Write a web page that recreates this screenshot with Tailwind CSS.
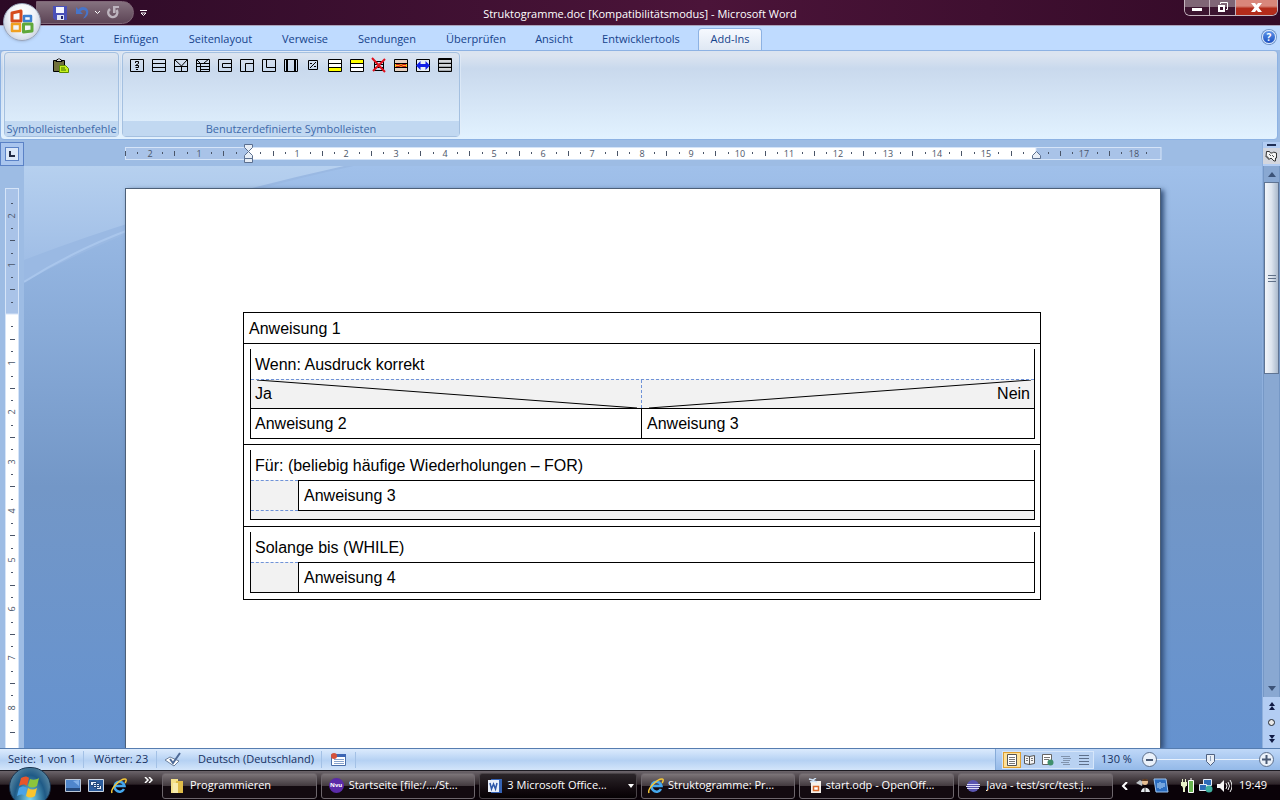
<!DOCTYPE html>
<html lang="de">
<head>
<meta charset="utf-8">
<title>Struktogramme.doc - Microsoft Word</title>
<script src="https://cdn.jsdelivr.net/npm/@tailwindcss/browser@4"></script>
</head>
<body class="flex h-screen flex-col overflow-hidden bg-[#9dbce4] font-['Open_Sans','Noto_Sans',sans-serif] text-[11px] text-[#15428b]">

<!-- Title bar -->
<header class="relative flex h-[26px] shrink-0 items-start justify-between border-b border-[#a9a3ba] bg-linear-to-r from-[#2c0a26] via-[#4b1439] via-55% to-[#330a27] text-white">
  <div class="flex h-[25px] w-[320px] items-center pl-9">
    <div class="flex h-[23px] w-[98px] items-center gap-[6px] rounded-r-full border border-[#806878] bg-linear-to-b from-[#85727f] to-[#5d4556] pl-[16px]">
      <button aria-label="Speichern"><svg class="block" width="14" height="14" viewBox="0 0 14 14"><path d="M0 0h14v14H2L0 12z" fill="#4a50b8"/><path d="M3 1h8v6H3z" fill="#f4f6ff"/><path d="M4 9h7v5H4z" fill="#dfe4f5"/><path d="M8 10h2v3H8z" fill="#23276e"/></svg></button>
      <button aria-label="Rückgängig" class="ml-[2px]"><svg class="block" width="15" height="14" viewBox="0 0 15 14"><path d="M1 1v7h7L5.500 5.500c3-3 6.500-1 5.500 2-.5 2-1.500 3-3 5 6-1 8-11 0-11.500C6 1 4.500 2 3.500 3.500z" fill="#4774c8"/></svg></button>
      <button aria-label="Rückgängig-Liste" class="-ml-[2px]"><svg class="block" width="7" height="5" viewBox="0 0 7 5"><path d="M1 1l2.500 2.500L6 1" fill="none" stroke="#fff"/></svg></button>
      <button aria-label="Wiederholen"><svg class="block" width="13" height="14" viewBox="0 0 13 14"><path d="M3 3A4.500 4.500 0 1 0 9.500 4" fill="none" stroke="#bdb4be" stroke-width="2.500"/><path d="M6 0h6v2H8.500v5H6z" fill="#bdb4be"/></svg></button>
    </div>
    <button class="ml-[6px]" aria-label="Symbolleiste anpassen"><svg class="block" width="7" height="8" viewBox="0 0 7 8"><path d="M0 1.500h7M1 4h5L3.500 6.500z" fill="none" stroke="#fff"/></svg></button>
  </div>
  <h1 class="pt-[5px] text-[11px] leading-[18px]">Struktogramme.doc [Kompatibilitätsmodus] - Microsoft Word</h1>
  <div class="flex w-[320px] justify-end pr-[2px]">
    <div class="flex h-[16px] w-[94px] overflow-hidden rounded-b-md border border-t-0 border-[#c4b4be]">
      <button aria-label="Minimieren" class="flex w-[25px] items-end justify-center border-r border-[#c4b4be] bg-linear-to-b from-[#7f6676] from-45% to-[#3c1530] to-50% pb-1"><span class="h-[3px] w-[10px] bg-white"></span></button>
      <button aria-label="Verkleinern" class="flex w-[26px] items-center justify-center border-r border-[#c4b4be] bg-linear-to-b from-[#7f6676] from-45% to-[#3c1530] to-50%"><svg width="11" height="11" viewBox="0 0 11 11"><path d="M3.500 2V.5h7v7H9" fill="none" stroke="#fff"/><path d="M2 4h5v5H2z" fill="none" stroke="#fff" stroke-width="2"/></svg></button>
      <button aria-label="Schließen" class="flex flex-1 items-center justify-center bg-linear-to-b from-[#d9877b] from-40% to-[#b32c1b] to-55%"><svg width="11" height="9" viewBox="0 0 11 9"><path d="M0 0h4l1.500 2L7 0h4L7.500 4.500 11 9H7L5.500 7 4 9H0l3.500-4.500z" fill="#fff"/></svg></button>
    </div>
  </div>
  <button aria-label="Office-Schaltfläche" class="absolute left-[3px] top-[3px] z-10 flex h-[38px] w-[38px] items-center justify-center rounded-full border border-[#9aa5ba] bg-radial-[at_50%_30%] from-white via-[#eef2f8] to-[#b3bdd0] shadow">
    <svg width="26" height="26" viewBox="0 0 26 26" fill="none" stroke-linejoin="round">
      <path d="M3 4l9-2v10H3z" stroke="#d64a1c" stroke-width="3"/>
      <path d="M15 7h7v5h-7z" stroke="#3c7fd0" stroke-width="2.500"/>
      <path d="M3 15h8v7H3z" stroke="#f0a020" stroke-width="2.500"/>
      <path d="M14.500 15H23v7l-8.500 1z" stroke="#5fa83a" stroke-width="3"/>
    </svg>
  </button>
</header>

<!-- Ribbon tabs -->
<nav class="flex h-[24px] shrink-0 items-end justify-between bg-[#bfdbff] pl-[45px] pr-[4px]">
  <div class="flex h-[22px]" role="tablist">
    <button role="tab" class="w-[54px]">Start</button>
    <button role="tab" class="w-[74px]">Einfügen</button>
    <button role="tab" class="w-[95px]">Seitenlayout</button>
    <button role="tab" class="w-[74px]">Verweise</button>
    <button role="tab" class="w-[90px]">Sendungen</button>
    <button role="tab" class="w-[88px]">Überprüfen</button>
    <button role="tab" class="w-[68px]">Ansicht</button>
    <button role="tab" class="w-[106px]">Entwicklertools</button>
    <button role="tab" aria-selected="true" class="ml-[4px] w-[64px] rounded-t border border-b-0 border-[#8db2e3] bg-linear-to-b from-[#f6f9fe] to-[#dfe8f4]">Add-Ins</button>
  </div>
  <button aria-label="Hilfe" class="mb-[6px] flex h-[14px] w-[14px] items-center justify-center rounded-full border border-[#dce8fa] bg-linear-to-b from-[#5f95ea] to-[#1c4fc0] text-[10px] font-bold leading-none text-white ring-1 ring-[#7295c8]">?</button>
</nav>

<!-- Ribbon -->
<section class="h-[92px] shrink-0 pb-[2px] pr-[2px]">
  <div class="flex h-full gap-[3px] rounded border border-[#8db2e3] bg-linear-to-b from-[#dbe4f0] from-5% via-[#c9d9ed] via-20% to-[#e2f2ff] pl-[3px] pt-px">
    <div class="flex h-[85px] w-[115px] flex-col justify-between rounded-sm border border-[#a4c0e0] ring-1 ring-[#e4eefa]/60">
      <div class="flex justify-center pr-[2px] pt-[5px]">
        <button aria-label="Einfügen"><svg class="block" width="17" height="16" viewBox="0 0 17 16"><path d="M1.500 2.500h11v11h-11z" fill="#71713c" stroke="#000"/><path d="M4 3.500l1-2h1l1-1 1 1h1l1 2z" fill="#ddd" stroke="#000"/><path d="M7.500 7.500h6l3 3v4h-9z" fill="#c6f21a" stroke="#5a8a00"/><path d="M9 10h4M9 12h5" stroke="#3a6a00"/></svg></button>
      </div>
      <h2 class="h-[15px] bg-[#c1d8f1] text-center text-[11px] leading-[15px] text-[#3e6aaa]">Symbolleistenbefehle</h2>
    </div>
    <div class="flex h-[85px] w-[338px] flex-col justify-between rounded-sm border border-[#a4c0e0] ring-1 ring-[#e4eefa]/60">
      <div class="flex pl-[3px] pt-[4px]">
        <button class="flex w-[22px] justify-center" aria-label="Eigenschaften"><svg width="16" height="16" viewBox="0 0 16 16" fill="none" stroke="#000"><path d="M1.500 2.500h13v12h-13z"/><path d="M6.500 6V4.500h3v2l-3 2h3v2h-3M7 12.500h2"/></svg></button>
        <button class="flex w-[22px] justify-center" aria-label="Anweisung"><svg width="16" height="16" viewBox="0 0 16 16" fill="none" stroke="#000"><path d="M1.500 2.500h13v12h-13zM1 6.500h14M1 10.500h14"/></svg></button>
        <button class="flex w-[22px] justify-center" aria-label="Verzweigung"><svg width="16" height="16" viewBox="0 0 16 16" fill="none" stroke="#000"><path d="M1.500 2.500h13v12h-13zM1 9.500h14M8.500 9v6M2 3l6.500 6L14 3"/></svg></button>
        <button class="flex w-[22px] justify-center" aria-label="Fallauswahl"><svg width="16" height="16" viewBox="0 0 16 16" fill="none" stroke="#000"><path d="M1.500 2.500h13v12h-13zM1 6.500h14M1 9.500h14M5 12.500h10M5.500 6v9M9 6l5-4M2 3l3.500 3.500"/></svg></button>
        <button class="flex w-[22px] justify-center" aria-label="Zählschleife"><svg width="16" height="16" viewBox="0 0 16 16" fill="none" stroke="#000"><path d="M1.500 2.500h13v12h-13zM15 6.500H5.500v4H15"/></svg></button>
        <button class="flex w-[22px] justify-center" aria-label="Kopfgesteuerte Schleife"><svg width="16" height="16" viewBox="0 0 16 16" fill="none" stroke="#000"><path d="M1.500 2.500h13v12h-13zM15 6.500H6.500V15"/></svg></button>
        <button class="flex w-[22px] justify-center" aria-label="Fußgesteuerte Schleife"><svg width="16" height="16" viewBox="0 0 16 16" fill="none" stroke="#000"><path d="M1.500 2.500h13v12h-13zM5.500 2v8.500H15"/></svg></button>
        <button class="flex w-[22px] justify-center" aria-label="Unterprogramm"><svg width="16" height="16" viewBox="0 0 16 16" fill="none" stroke="#000"><path d="M1.500 2.500h13v12h-13z"/><path d="M4 2v13M12 2v13" stroke-width="2"/></svg></button>
        <button class="flex w-[22px] justify-center" aria-label="Skalieren"><svg width="16" height="16" viewBox="0 0 16 16" fill="none" stroke="#000"><path d="M3.500 3.500h9v9h-9zM5 11l6-6M5 6.500h2M9 9.500h2"/></svg></button>
        <button class="flex w-[22px] justify-center" aria-label="Zeile unten einfügen"><svg width="16" height="16" viewBox="0 0 16 16" fill="none" stroke="#000"><path d="M2 3h12v8H2z" fill="#fff" stroke="none"/><path d="M2 11h12v3H2z" fill="#ff0" stroke="none"/><path d="M1.500 2.500h13v12h-13zM1 6.500h14M1 10.500h14"/></svg></button>
        <button class="flex w-[22px] justify-center" aria-label="Zeile oben einfügen"><svg width="16" height="16" viewBox="0 0 16 16" fill="none" stroke="#000"><path d="M2 7h12v7H2z" fill="#fff" stroke="none"/><path d="M2 3h12v3H2z" fill="#ff0" stroke="none"/><path d="M1.500 2.500h13v12h-13zM1 6.500h14M1 10.500h14"/></svg></button>
        <button class="flex w-[22px] justify-center" aria-label="Löschen"><svg width="16" height="16" viewBox="0 0 16 16" fill="none" stroke="#000"><path d="M3.500 4.500h9v9h-9zM3 7.500h10M3 10.500h10"/><path d="M1 1l13 14M14 2L2 14" stroke="#e0101c" stroke-width="2"/></svg></button>
        <button class="flex w-[22px] justify-center" aria-label="Verbinden"><svg width="16" height="16" viewBox="0 0 16 16" fill="none" stroke="#000"><path d="M2 3h12v11H2z" fill="#e4d0c0" stroke="none"/><path d="M2 6h12v5H2z" fill="#f8c020" stroke="none"/><path d="M1.500 2.500h13v12h-13zM1 6.500h14M1 10.500h14"/><path d="M3 7.500h3l4 2h3M3 9.500h3l4-2h3" stroke="#d01818"/></svg></button>
        <button class="flex w-[22px] justify-center" aria-label="Breite anpassen"><svg width="16" height="16" viewBox="0 0 16 16" fill="none" stroke="#000"><path d="M1.500 2.500h13v12h-13z" fill="#e8eef6"/><path d="M1 8.500L5.500 4v3h5V4L15 8.500 10.500 13v-3h-5v3z" fill="#1020e8" stroke="none"/></svg></button>
        <button class="flex w-[22px] justify-center" aria-label="Rahmen"><svg width="16" height="16" viewBox="0 0 16 16" fill="none" stroke="#000"><path d="M1.500 1.500h13v13h-13z" fill="#d4d6da"/><path d="M1 2.500h14M1 6.500h14M1 10.500h14"/><path d="M2 5.500h12M2 9.500h12M2 13.500h12" stroke="#a4a8ae"/></svg></button>
      </div>
      <h2 class="h-[15px] bg-[#c1d8f1] text-center text-[11px] leading-[15px] text-[#3e6aaa]">Benutzerdefinierte Symbolleisten</h2>
    </div>
  </div>
</section>

<!-- Editing area -->
<main class="flex min-h-0 flex-1">
  <div class="flex w-6 shrink-0 flex-col items-center">
    <button aria-label="Tabstopp" class="flex h-[24px] w-6 shrink-0 items-center justify-center border border-[#5b82c6] bg-[#a9c5ee]"><span class="flex h-[14px] w-[14px] items-center justify-center border border-[#5b82c6] bg-[#dce8f8]"><span class="h-[6px] w-[6px] border-b-2 border-l-2 border-[#222b44]"></span></span></button>
    <div id="vbox" class="mt-[22px] min-h-0 w-[14px] flex-1 overflow-hidden"><svg id="vruler" class="block h-full w-full"></svg></div>
  </div>

  <div class="flex min-w-0 flex-1 flex-col">
    <div class="flex h-[24px] shrink-0 items-start justify-center pt-[5px]">
      <svg id="hruler" class="w-[1037px] shrink-0 overflow-visible" height="19"></svg>
    </div>
    <div class="relative flex min-h-0 flex-1 justify-center overflow-hidden bg-linear-to-b from-[#a0c0ea] via-[#7397c7] via-55% to-[#6592cf] pt-[22px]">
      <svg class="absolute left-0 top-0" width="520" height="180" viewBox="0 0 520 180">
        <defs><linearGradient id="sky" x1="0" y1="0" x2="0" y2="1"><stop offset="0" stop-color="#b6d0ef"/><stop offset="1" stop-color="#a0bee6"/></linearGradient></defs>
        <path d="M0 0h330Q140 40 0 116z" fill="#9ab9e3"/>
        <path d="M0 0h320Q140 40 0 94z" fill="url(#sky)"/>
        <path d="M0 116Q50 84 110 62" fill="none" stroke="#a9c6ec" stroke-width="2"/>
      </svg>
      <article class="relative w-[1036px] shrink-0 border border-b-0 border-[#4d6078] bg-white pl-[117px] pr-[119px] pt-[123px] font-['Liberation_Sans',sans-serif] text-[16px] leading-[20px] text-black shadow-[3px_2px_5px_#33507a]">
        <!-- Nassi-Shneiderman diagram -->
        <div class="border border-black">
          <p class="h-[31px] border-b border-black px-[5px] pt-[6px]">Anweisung 1</p>
          <div class="border-b border-black py-[5px] pl-[6px] pr-[5px]">
            <div class="border-x border-b border-black">
              <p class="h-[30px] px-1 pt-[6px]">Wenn: Ausdruck korrekt</p>
              <div class="relative flex h-[30px] border-b border-t border-b-black border-t-[#6f93d8] bg-[#f2f2f2] [border-top-style:dashed]">
                <p class="w-[391px] border-r border-dashed border-r-[#6f93d8] px-1 pt-[4px]">Ja</p>
                <p class="flex-1 px-1 pt-[4px] text-right">Nein</p>
                <svg class="absolute inset-0 h-full w-full" viewBox="0 0 783 28" preserveAspectRatio="none" stroke="#000"><path d="M6 0L386 28M398 28L780 0" fill="none"/></svg>
              </div>
              <div class="flex h-[29px]">
                <p class="w-[391px] border-r border-black px-1 pt-[5px]">Anweisung 2</p>
                <p class="flex-1 px-[5px] pt-[5px]">Anweisung 3</p>
              </div>
            </div>
          </div>
          <div class="border-b border-black pb-[6px] pl-[6px] pr-[5px] pt-[5px]">
            <div class="border-x border-b border-black bg-[#f2f2f2]">
              <p class="h-[30px] bg-white px-1 pt-[6px]">Für: (beliebig häufige Wiederholungen – FOR)</p>
              <div class="flex h-[31px]">
                <div class="w-[47px] border-y border-dashed border-[#6f93d8]"></div>
                <p class="flex-1 border-y border-l border-black bg-white px-[5px] pt-[5px]">Anweisung 3</p>
              </div>
              <div class="h-[8px]"></div>
            </div>
          </div>
          <div class="pb-[6px] pl-[6px] pr-[5px] pt-[5px]">
            <div class="border-x border-b border-black bg-[#f2f2f2]">
              <p class="h-[30px] bg-white px-1 pt-[6px]">Solange bis (WHILE)</p>
              <div class="flex h-[30px]">
                <div class="w-[47px] border-t border-dashed border-[#6f93d8]"></div>
                <p class="flex-1 border-l border-t border-black bg-white px-[5px] pt-[5px]">Anweisung 4</p>
              </div>
            </div>
          </div>
        </div>
      </article>
    </div>
  </div>

  <!-- Vertical scroll bar -->
  <div class="flex w-[18px] shrink-0 flex-col items-center border-l border-[#8fb0dd] bg-[#b3cdf3] pt-[2px]">
    <div class="h-[2px] w-[9px] shrink-0 bg-[#1f2f55]"></div>
    <button aria-label="Lineal" class="mt-[2px] flex h-[16px] w-full shrink-0 items-center justify-center bg-[#d3d6de]"><svg width="13" height="12" viewBox="0 0 13 12"><path d="M1.500 1.500h3l1 1.500h2l1-1 3 1v5h-1v3H9l-2-2-1-1-1 1h-2v-2h-2z" fill="#f4f4f4" stroke="#333"/><path d="M4 4l2 2M7 5l2 2" stroke="#555"/></svg></button>
    <div class="mt-[2px] flex w-full flex-1 flex-col items-center border-x border-[#7698c6] bg-[#89a8d2]">
      <button aria-label="Nach oben" class="flex h-[16px] w-full shrink-0 items-center justify-center"><svg width="8" height="5"><path d="M0 5l4-5 4 5z" fill="#3c5378"/></svg></button>
      <div class="flex h-[192px] w-full shrink-0 flex-col items-center justify-center gap-[2px] border border-[#5f7493] bg-linear-to-r from-[#f2f5fa] via-[#dce4ee] to-[#aab9cc]">
        <span class="h-px w-2 bg-[#5f7088]"></span><span class="h-px w-2 bg-[#5f7088]"></span><span class="h-px w-2 bg-[#5f7088]"></span>
      </div>
      <div class="flex-1"></div>
      <button aria-label="Nach unten" class="flex h-[18px] w-full shrink-0 items-center justify-center"><svg width="8" height="5"><path d="M0 0l4 5 4-5z" fill="#3c5378"/></svg></button>
    </div>
    <div class="flex h-[51px] shrink-0 flex-col items-center justify-around">
      <button aria-label="Vorherige Seite"><svg class="block" width="6" height="8"><path d="M0 4l3-4 3 4zM0 8l3-4 3 4z" fill="#101a44"/></svg></button>
      <button aria-label="Browseobjekt" class="h-[7px] w-[7px] rounded-full border border-[#20262f] bg-[#e8e8e8]"></button>
      <button aria-label="Nächste Seite"><svg class="block" width="6" height="8"><path d="M0 0l3 4 3-4zM0 4l3 4 3-4z" fill="#101a44"/></svg></button>
    </div>
  </div>
</main>

<!-- Status bar -->
<footer class="flex h-[22px] shrink-0 items-center border-t border-[#567db0] bg-linear-to-b from-[#dcebfd] via-[#b5d1f3] via-55% to-[#d3e5fa] text-[#15305f]">
  <span class="w-[84px] border-r border-[#a3c1e6] pl-2">Seite: 1 von 1</span>
  <span class="w-[73px] border-r border-[#a3c1e6] pl-[10px]">Wörter: 23</span>
  <button aria-label="Rechtschreibprüfung" class="flex w-[32px] justify-center"><svg width="18" height="15" viewBox="0 0 18 15"><path d="M1 8l5-3 9 4-5 5z" fill="#fff" stroke="#6b7f9c"/><path d="M6 7l3 4 7-10" fill="none" stroke="#4e6a96" stroke-width="2"/></svg></button>
  <button class="w-[133px] border-r border-[#a3c1e6] pl-[9px] text-left">Deutsch (Deutschland)</button>
  <button aria-label="Makro" class="flex h-4 w-[34px] items-center justify-center border-r border-[#a3c1e6]"><svg width="15" height="13" viewBox="0 0 15 13"><path d="M.5 1.500h14v11H.5z" fill="#fff" stroke="#4a6ea8"/><path d="M4 1h11v3H4z" fill="#3c66b4"/><path d="M3 6.500h10M3 8.500h10M3 10.500h10" stroke="#86a2cc"/><circle cx="3" cy="3" r="3" fill="#d4523c"/></svg></button>
  <div class="ml-auto flex h-full w-[285px] items-center border-l border-[#86abd9] bg-linear-to-b from-[#bfd8f8] to-[#94b9e8] pl-[6px]">
    <div class="flex h-[18px] w-[92px] border border-[#d6e6fa] bg-[#b9d2f2]">
      <button aria-label="Seitenlayout" class="flex w-[18px] items-center justify-center border border-[#e0a030] bg-[#fde19a]"><svg class="shrink-0" width="12" height="12" fill="none"><path d="M1.500.5h9v11h-9z" fill="#fff" stroke="#555"/><path d="M3 3.500h6M3 5.500h6M3 7.500h6M3 9.500h6" stroke="#777"/></svg></button>
      <button aria-label="Vollbild-Lesemodus" class="flex w-[18px] items-center justify-center"><svg width="12" height="12" fill="none"><path d="M.5 1.500l5 1 5-1v8l-5 1-5-1zM5.500 2v9" fill="#f4f4f4" stroke="#555"/><path d="M2 4.500h2M2 6.500h2M7 4.500h2M7 6.500h2" stroke="#777"/></svg></button>
      <button aria-label="Weblayout" class="flex w-[18px] items-center justify-center"><svg width="12" height="12" fill="none"><path d="M.5.5h9v10h-9z" fill="#fff" stroke="#666"/><path d="M2 3.500h6M2 5.500h5" stroke="#777"/><circle cx="8.500" cy="8.500" r="3" fill="#3f8f6c"/></svg></button>
      <button aria-label="Gliederung" class="flex w-[18px] items-center justify-center"><svg width="12" height="12"><path d="M1 2.500h9M3 4.500h8M3 6.500h7M1 8.500h8M3 10.500h7" stroke="#8093ad"/></svg></button>
      <button aria-label="Entwurf" class="flex w-[18px] items-center justify-center"><svg width="12" height="12"><path d="M1 1.500h10M1 4.500h10M1 7.500h10M1 10.500h10" stroke="#5d6f8a"/></svg></button>
    </div>
    <button class="w-[45px] text-center">130 %</button>
    <button aria-label="Verkleinern" class="ml-[3px] flex h-[15px] w-[15px] items-center justify-center rounded-full border border-[#5a6d8a] bg-[#eaf1fa]"><span class="h-[2px] w-[7px] bg-[#4a5a74]"></span></button>
    <div class="flex h-full flex-1 items-center bg-linear-to-b from-transparent from-48% via-[#e9f2fd] via-50% to-transparent to-54%"><svg class="ml-[48px]" width="11" height="14"><path d="M1.500 1.500h8v7l-4 4-4-4z" fill="#e8eef6" stroke="#4f6180"/><path d="M5.500 3v5" stroke="#8da0bb"/></svg></div>
    <button aria-label="Vergrößern" class="mr-[6px] flex h-[15px] w-[15px] items-center justify-center rounded-full border border-[#5a6d8a] bg-[#eaf1fa]"><svg width="9" height="9"><path d="M0 4.500h9M4.500 0v9" stroke="#4a5a74" stroke-width="2"/></svg></button>
  </div>
</footer>

<!-- Taskbar -->
<div class="flex h-[30px] shrink-0 items-center border-t border-[#1d1b22] bg-linear-to-b from-[#6b646a] via-[#2e2529] via-45% to-[#0a0208] to-50% text-white">
  <button aria-label="Start" class="relative ml-[9px] h-[29px] w-[42px] shrink-0">
    <span class="absolute -top-[4px] left-0 flex h-[40px] w-[42px] items-center justify-center rounded-full border border-[#1a3450] bg-radial-[at_50%_85%] from-[#7fd8f0] via-[#1f5a86] via-55% to-[#7fa5b4]">
      <svg width="26" height="24" viewBox="0 0 26 24"><path d="M4 3c3-2 6-2 8 0l-2 8c-2-2-5-2-8 0z" fill="#e8562a"/><path d="M13 4c3 1 6 1 9-1l-2 8c-3 2-6 2-9 0z" fill="#8cc63c"/><path d="M2 13c3-2 5-2 8 0l-2 8c-2-2-5-2-8 0z" fill="#4ba3e8"/><path d="M11 13c3 2 6 2 9 0l-2 8c-3 2-6 2-9 0z" fill="#fbc52d"/></svg>
    </span>
  </button>
  <div class="flex w-[111px] shrink-0 items-center pl-[14px]">
    <button aria-label="Desktop anzeigen"><svg class="block" width="16" height="13" viewBox="0 0 16 13"><path d="M.5.5h15v12H.5z" fill="#4f86cc" stroke="#b9c7d8"/><path d="M1 9h14v3H1z" fill="#24497c"/><path d="M8 2l6-1v6z" fill="#82b0e8"/></svg></button>
    <button aria-label="Fenster wechseln" class="ml-[7px]"><svg class="block" width="16" height="13" viewBox="0 0 16 13"><path d="M.5.5h15v12H.5z" fill="#2c5d9e" stroke="#c9d4e2"/><path d="M2.500 2.500h6v4h-6zM5.500 4.500h6v4h-6zM8.500 6.500h5v4h-5z" fill="#e9f0fa" stroke="#24497c"/></svg></button>
    <button aria-label="Internet Explorer" class="ml-[7px]"><svg class="block" width="16" height="16" viewBox="0 0 16 16"><path d="M13 11a5 5 0 1 1 .5-3H4" fill="none" stroke="#45a8ee" stroke-width="2.500"/><path d="M1 15C-1 11 9 1 14 1c2 0 1 3 0 4" fill="none" stroke="#f5c838" stroke-width="1.500"/></svg></button>
    <button aria-label="Weitere" class="mb-3 ml-[17px]"><svg class="block" width="9" height="6"><path d="M1 0l3 3-3 3M5 0l3 3-3 3" fill="none" stroke="#fff" stroke-width="1.500"/></svg></button>
  </div>
  <div class="flex min-w-0 flex-1 gap-[4px] text-[11px]">
    <button class="flex h-[26px] min-w-0 flex-1 items-center gap-[6px] rounded-[3px] border border-[#6d666c] bg-linear-to-b from-[#7c7579] via-[#453c41] via-48% to-[#130a10] to-52% pl-[7px]"><svg class="shrink-0" width="14" height="16" viewBox="0 0 14 16"><path d="M1 1h7v14H1z" fill="#f5e28a"/><path d="M6 3h7v12H5z" fill="#e0bd4a"/><path d="M3 5h5v10H3z" fill="#f8ecae"/></svg><span class="truncate">Programmieren</span></button>
    <button class="flex h-[26px] min-w-0 flex-1 items-center gap-[5px] rounded-[3px] border border-[#6d666c] bg-linear-to-b from-[#7c7579] via-[#453c41] via-48% to-[#130a10] to-52% pl-[7px]"><span class="flex h-[15px] w-[15px] shrink-0 items-center justify-center rounded-full bg-[#5a2aa8] text-[6px] font-bold">Nvu</span><span class="truncate">Startseite [file:/.../St...</span></button>
    <button class="flex h-[26px] min-w-0 flex-1 items-center gap-[5px] rounded-[3px] border border-[#4a4448] bg-linear-to-b from-[#2c262a] to-[#060204] pl-[8px] pr-[2px]"><svg class="shrink-0" width="14" height="14" viewBox="0 0 14 14"><path d="M3 0h11v14H3z" fill="#3563b5"/><path d="M0 1h11v12H0z" fill="#e8effa"/><path d="M2 4l1.500 6L5.500 5l2 5L9 4" fill="none" stroke="#2a55a8" stroke-width="1.500"/></svg><span class="flex-1 truncate text-left">3&nbsp;Microsoft Office...</span><svg class="shrink-0" width="6" height="4"><path d="M0 0h6L3 4z" fill="#fff"/></svg></button>
    <button class="flex h-[26px] min-w-0 flex-1 items-center gap-[4px] rounded-[3px] border border-[#6d666c] bg-linear-to-b from-[#7c7579] via-[#453c41] via-48% to-[#130a10] to-52% pl-[6px]"><svg class="shrink-0" width="16" height="16" viewBox="0 0 16 16"><path d="M13 11a5 5 0 1 1 .5-3H4" fill="none" stroke="#45a8ee" stroke-width="2.500"/><path d="M1 15C-1 11 9 1 14 1c2 0 1 3 0 4" fill="none" stroke="#f5c838" stroke-width="1.500"/></svg><span class="truncate">Struktogramme: Pr...</span></button>
    <button class="flex h-[26px] min-w-0 flex-1 items-center gap-[4px] rounded-[3px] border border-[#6d666c] bg-linear-to-b from-[#7c7579] via-[#453c41] via-48% to-[#130a10] to-52% pl-[8px]"><svg class="shrink-0" width="14" height="16" viewBox="0 0 14 16"><path d="M3 3h10v12H3z" fill="#f6f1ea"/><path d="M1 1l4 1 3-2M2 4l4-1 3 1" fill="none" stroke="#cfe2f5" stroke-width="1.500"/><path d="M5.500 8.500h5v4h-5z" fill="#fff" stroke="#d8692a" stroke-width="1.500"/></svg><span class="truncate">start.odp - OpenOff...</span></button>
    <button class="flex h-[26px] min-w-0 flex-1 items-center gap-[5px] rounded-[3px] border border-[#6d666c] bg-linear-to-b from-[#7c7579] via-[#453c41] via-48% to-[#130a10] to-52% pl-[7px]"><svg class="shrink-0" width="15" height="14" viewBox="0 0 15 14"><circle cx="7" cy="7" r="6" fill="#5a55b0"/><path d="M1 5.500h13M0 7.500h14M1 9.500h12" stroke="#dcdcf8"/></svg><span class="truncate">Java - test/src/test.j...</span></button>
  </div>
  <div class="flex w-[167px] shrink-0 items-center pl-[8px]">
    <button aria-label="Ausgeblendete Symbole"><svg class="block" width="7" height="8"><path d="M6 0L2 4l4 4" fill="none" stroke="#fff" stroke-width="2"/></svg></button>
    <svg class="ml-[8px] shrink-0" width="15" height="16" viewBox="0 0 15 16"><path d="M0 5l4-3 3 2-1 4z" fill="#bfc4c8"/><circle cx="9" cy="4" r="3" fill="#e5bd92"/><path d="M6 3c0-3 6-3 6 0z" fill="#5d3a20"/><path d="M5 14c0-5 8-6 9 0z" fill="#e6eaee"/><path d="M9 9v5" stroke="#333"/></svg>
    <svg class="ml-[2px] shrink-0" width="16" height="16" viewBox="0 0 16 16"><path d="M1 1h12l2 13H3z" fill="#2a6cc0" stroke="#9cc4f0"/><path d="M5 5v5M7 4v7M9 5v5M11 5v4" stroke="#bfe0ff"/></svg>
    <svg class="ml-[12px] shrink-0" width="14" height="16" viewBox="0 0 14 16"><path d="M0 4h6v4H5l-1 2v4H2v-4L1 8H0zM1 1h1v3H1zM4 1h1v3H4z" fill="#e8f0c8"/><path d="M7.500 2.500h5v12h-5z" fill="#69b450" stroke="#fff"/><path d="M9 1h2" stroke="#fff"/></svg>
    <svg class="ml-[4px] shrink-0" width="14" height="16" viewBox="0 0 14 16"><path d="M4.500 1.500h8v6h-8z" fill="#2c6cb8" stroke="#e4edf8"/><path d="M.5 6.500h7v6h-7z" fill="#2c6cb8" stroke="#e4edf8"/><circle cx="10" cy="11" r="3.500" fill="#3fb0a0"/></svg>
    <svg class="ml-[4px] shrink-0" width="15" height="14" viewBox="0 0 15 14"><path d="M0 5h3l4-4v12L3 9H0z" fill="#f4f4f4"/><path d="M9 4q2 3 0 6M11 3q3 4 0 8M13 1q4 6 0 12" fill="none" stroke="#f4f4f4"/></svg>
    <time class="ml-auto mr-[13px]">19:49</time>
  </div>
</div>

<script>
// Draws a centimetre ruler: numbers on full units, long ticks on halves, dots on quarters.
const CM = 49.2;
function ruler(svg, vertical, zero, end, length, from, to) {
  const rect = (a, b, fill) => vertical
    ? `<rect x="0.5" y="${a}" width="13" height="${b - a}" fill="${fill}" stroke="#d5e4f8"/>`
    : `<rect x="${a}" y="0.5" width="${b - a}" height="12" fill="${fill}" stroke="#d5e4f8"/>`;
  let out = rect(0.5, length, '#a9c3e8') + rect(zero, end, '#ffffff');
  for (let q = from * 4; q <= to * 4; q++) {
    const p = Math.round(zero + q * CM / 4);
    if (q === 0 || p > length - 6 || (!vertical && Math.abs(p - end) < 5)) continue;
    if (q % 4 === 0) {
      const at = vertical ? `transform="translate(10 ${p}) rotate(-90)"` : `x="${p}" y="10"`;
      out += `<text ${at} text-anchor="middle" font-size="9" fill="#4a5568">${Math.abs(q / 4)}</text>`;
    } else {
      const h = q % 2 === 0 ? 5 : 2;
      out += vertical ? `<rect x="${7 - (h >> 1)}" y="${p}" width="${h}" height="1" fill="#4a5568"/>`
                      : `<rect x="${p}" y="${6 - (h >> 1)}" width="1" height="${h}" fill="#4a5568"/>`;
    }
  }
  svg.innerHTML = out;
}
const h = document.getElementById('hruler');
ruler(h, false, 123, 911, 1036, -2.5, 18.25);
h.innerHTML += '<g fill="#e8eef6" stroke="#5b6f8f"><path d="M119.500-2.500h8v3l-4 4-4-4zM119.500 11.500v-3l4-4 4 4v3zM119.500 11.500h8v4h-8zM907.500 11.500v-3l4-4 4 4v3z"/></g>';

// The vertical ruler always ends with the visible part of the page.
const box = document.getElementById('vbox');
const v = document.getElementById('vruler');
new ResizeObserver(() => ruler(v, true, 126, box.clientHeight + 1, box.clientHeight + 1, -2.25, 30)).observe(box);
</script>
</body>
</html>
